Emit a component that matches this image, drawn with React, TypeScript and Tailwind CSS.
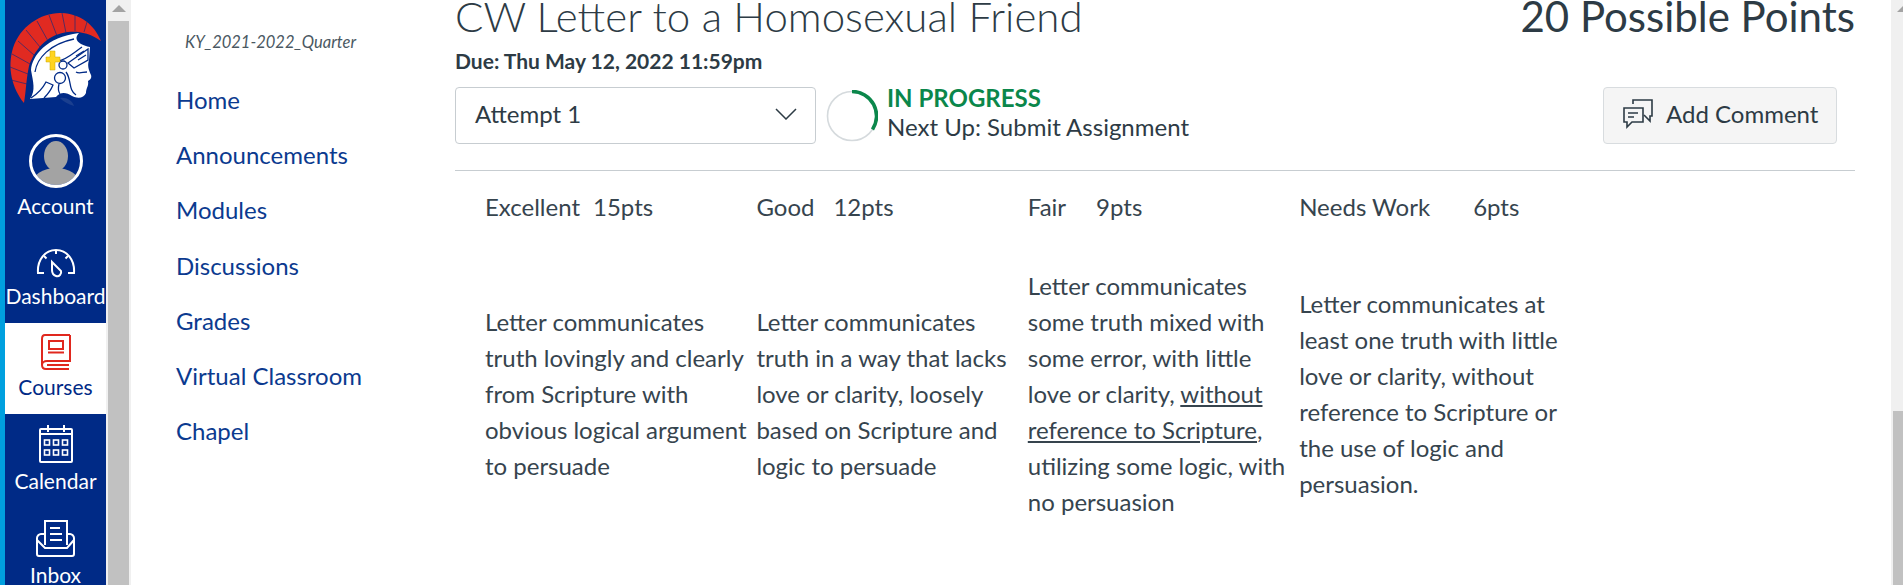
import React from 'react';

const Logo = () => (
  <svg width="101" height="110" viewBox="5 0 101 110">
    {/* crest */}
    <path d="M24 103 C12 88 7 68 13 48 C20 26 42 12 62 13 C80 14 94 24 101 41 C90 33 78 31 68 32 C50 34 36 46 29 66 C26 80 26 92 24 103 Z" fill="#e12a21" />
    <g stroke="#002a86" strokeWidth="0.8" fill="none" opacity="0.75">
      <path d="M27 84 L11 80" />
      <path d="M28 74 L10 67" />
      <path d="M30 64 L12 54" />
      <path d="M34 55 L18 41" />
      <path d="M40 47 L26 30" />
      <path d="M48 41 L37 21" />
      <path d="M57 36 L49 15" />
      <path d="M66 33 L62 13" />
      <path d="M75 31 L75 15" />
      <path d="M84 32 L87 22" />
    </g>
    {/* helmet */}
    <path d="M30 99 C36 90 33 82 31 70 C32 56 46 37 79 33 C74 38 76 44 90 47 L89 60 C87 66 89 70 91 75 C92 78 90 80 88 81 C89 86 86 88 86 93 C84 98 78 99 72 96 C66 92 60 92 56 97 Z" fill="#ffffff" />
    <g stroke="#002a86" strokeWidth="1.3" fill="none">
      <path d="M35 72 C37 58 50 44 74 39" />
      <path d="M31 98 C40 92 44 86 46 82 L53 85 C51 90 48 94 44 98" />
      <path d="M58 61 C66 60 72 54 82 47" />
      <path d="M68 63 L88 49 L88 60 L74 68 Z" />
      <path d="M76 56 L84 51 M78 60 L86 55" />
      <circle cx="63" cy="65" r="4" />
      <circle cx="60" cy="78" r="5.5" />
      <path d="M59 84 C58 88 58 91 60 94" />
      <path d="M66 72 C72 80 68 90 76 95" />
      <path d="M76 72 C79 74 83 72 87 72" />
    </g>
    <path d="M50 51 H55 V57 H60 V62 H55 V70 H50 V62 H46 V57 H50 Z" fill="#ffd420" stroke="#c9a400" strokeWidth="0.5" />
    <path d="M60 98 C66 97 72 100 74 106 C68 104 64 102 60 98 Z" fill="#1a3f8f" />
  </svg>
);

const AccountIcon = () => (
  <svg width="54" height="54" viewBox="0 0 54 54" className="shrink-0">
    <defs>
      <clipPath id="acc">
        <circle cx="27" cy="27" r="24" />
      </clipPath>
    </defs>
    <g clipPath="url(#acc)" fill="#a3a3a3">
      <ellipse cx="27" cy="22" rx="12" ry="15" />
      <ellipse cx="27" cy="50" rx="24" ry="16" />
    </g>
    <circle cx="27" cy="27" r="25.5" fill="none" stroke="#ffffff" strokeWidth="3" />
  </svg>
);

const DashboardIcon = () => (
  <svg width="40" height="30" viewBox="0 0 40 30" fill="none" stroke="#ffffff" strokeWidth="2" className="shrink-0">
    <path d="M8 25 H2 C1 12 9 2 20 2 C31 2 39 12 38 25 H32" />
    <path d="M20 2 V6 M8 8 L10.5 10.5 M32 8 L29.5 10.5" />
    <path d="M16 14 L25 23 C26 26 23 29 20 28 C17 27 16 24 16 22 Z" />
  </svg>
);

const CoursesIcon = () => (
  <svg width="30" height="36" viewBox="0 0 30 36" fill="none" stroke="#e0281e" strokeWidth="2" className="shrink-0">
    <path d="M29 1 H4 C2 1 1 3 1 5 V31 C1 34 3 35 5 35 H28" />
    <path d="M29 1 V27 H6 C3 27 1 29 1 31" />
    <path d="M6 31 H28" />
    <rect x="8" y="7" width="14" height="8" />
    <path d="M7 18.5 H23" />
  </svg>
);

const CalendarIcon = () => (
  <svg width="34" height="38" viewBox="0 0 34 38" fill="none" stroke="#ffffff" strokeWidth="2" className="shrink-0">
    <rect x="1" y="4" width="32" height="33" rx="1" />
    <path d="M1 9 H33 M9 0 V7 M25 0 V7" />
    <g strokeWidth="1.6">
      <rect x="5.5" y="15" width="5" height="5" />
      <rect x="14.5" y="15" width="5" height="5" />
      <rect x="23.5" y="15" width="5" height="5" />
      <rect x="5.5" y="25" width="5" height="5" />
      <rect x="14.5" y="25" width="5" height="5" />
      <rect x="23.5" y="25" width="5" height="5" />
    </g>
  </svg>
);

const InboxIcon = () => (
  <svg width="39" height="37" viewBox="0 0 39 37" fill="none" stroke="#ffffff" strokeWidth="2" className="shrink-0">
    <path d="M9 25 V1 H31 V25" />
    <path d="M14 8 H24 M14 14 H26 M14 20 H26" />
    <path d="M9 14 H5 C3 14 1 16 1 18 V34 C1 35 2 36 3 36 H36 C37 36 38 35 38 34 V18 C38 16 36 14 34 14 H31" />
    <path d="M1 20 L9 28 H31 L38 20" />
  </svg>
);

const CommentIcon = () => (
  <svg width="30" height="30" viewBox="0 0 30 30" fill="none" stroke="#2d3b45" strokeWidth="1.6" className="shrink-0">
    <path d="M1 9 H20 V23 H9 L4 28 V23 H1 Z" />
    <path d="M5 14 H15 M5 18 H11" />
    <path d="M10 5 V1 H29 V17 H27 V22 L21 16" />
  </svg>
);

const ProgressRing = () => (
  <svg width="52" height="52" viewBox="0 0 52 52" fill="none" className="shrink-0">
    <circle cx="26" cy="26" r="24.5" stroke="#d5dadd" strokeWidth="1.6" />
    <path d="M26 1.5 A24.5 24.5 0 0 1 46.5 39.5" stroke="#0b874b" strokeWidth="3.6" />
  </svg>
);

const Scrollbar = ({ thumbClass }: { thumbClass: string }) => (
  <div className="w-[25px] shrink-0 bg-[#f0f0f0] flex flex-col items-center h-full">
    <div className="mt-[5px] h-0 w-0 border-x-[7px] border-b-[7px] border-x-transparent border-b-[#a3a3a3] shrink-0" />
    <div className={`w-[21px] flex-1 bg-[#c1c1c1] ${thumbClass}`} />
  </div>
);

const NavItem = ({
  icon,
  label,
  className,
  labelClass = '',
}: {
  icon: React.ReactNode;
  label: string;
  className: string;
  labelClass?: string;
}) => (
  <div className={`flex flex-col items-center shrink-0 ${className}`}>
    <div className="h-[47px] flex items-end justify-center">{icon}</div>
    <div className={`h-[36px] leading-[36px] text-[21px] whitespace-nowrap ${labelClass}`}>{label}</div>
  </div>
);

const courseLinks = ['Home', 'Announcements', 'Modules', 'Discussions', 'Grades', 'Virtual Classroom', 'Chapel'];

const RubricHeader = ({ name, pts, gap }: { name: string; pts: string; gap: string }) => (
  <div className="h-[36px] leading-[36px] whitespace-nowrap">
    {name}
    <span className={gap}>{pts}</span>
  </div>
);

export default function App() {
  return (
    <div className="w-[1903px] h-[585px] overflow-hidden flex bg-white font-['Lato',sans-serif] text-[#2d3b45]">
      <div className="w-[5px] shrink-0 bg-[#00a0df]" />
      <div className="w-[101px] shrink-0 bg-[#002a86] text-white flex flex-col">
        <div className="h-[141px] shrink-0">
          <Logo />
        </div>
        <NavItem icon={<AccountIcon />} label="Account" className="h-[90px]" />
        <NavItem icon={<DashboardIcon />} label="Dashboard" className="h-[92px]" />
        <NavItem icon={<CoursesIcon />} label="Courses" labelClass="-mt-[1px]" className="h-[91px] bg-white text-[#002a86]" />
        <NavItem icon={<CalendarIcon />} label="Calendar" className="h-[96px] pt-[2px]" />
        <NavItem icon={<InboxIcon />} label="Inbox" className="h-[90px]" />
      </div>
      <Scrollbar thumbClass="mt-[9px]" />

      <div className="w-[324px] shrink-0 pl-[45px]">
        <div className="pt-[32px] pl-[9px] h-[72px] text-[16.5px] italic text-[#4a5862] whitespace-nowrap leading-[20px]">
          KY_2021-2022_Quarter
        </div>
        {courseLinks.map((link) => (
          <div key={link} className="h-[55.2px] leading-[55px] text-[24px] text-[#0b3a8f] whitespace-nowrap">
            {link}
          </div>
        ))}
      </div>

      <div className="w-[1436px] shrink-0 pr-[36px]">
        <div className="flex justify-between items-start -mt-[10px] h-[58px]">
          <h1 className="text-[42px] font-light leading-[52px] whitespace-nowrap">
            CW Letter to a Homosexual Friend
          </h1>
          <div className="text-[42px] leading-[52px] whitespace-nowrap">20 Possible Points</div>
        </div>
        <div className="h-[39px] leading-[26px] text-[21px] font-bold whitespace-nowrap">
          Due: Thu May 12, 2022 11:59pm
        </div>
        <div className="flex items-center h-[57px]">
          <div className="w-[361px] h-[57px] pb-[4px] border border-[#c7cdd1] rounded-[4px] flex items-center justify-between pl-[19px] pr-[18px] text-[24px]">
            <span>Attempt 1</span>
            <svg width="22" height="12" viewBox="0 0 22 12" fill="none" stroke="#2d3b45" strokeWidth="1.5">
              <path d="M1 1 L11 11 L21 1" />
            </svg>
          </div>
          <div className="ml-[10px]">
            <ProgressRing />
          </div>
          <div className="ml-[9px] flex flex-col text-[24px] leading-[29px] -mt-[7px]">
            <span className="font-bold text-[#0b874b]">IN PROGRESS</span>
            <span>Next Up: Submit Assignment</span>
          </div>
          <div className="ml-auto mr-[18px] w-[234px] h-[57px] pb-[3px] bg-[#f5f5f5] border border-[#d8dcdf] rounded-[4px] flex items-center pl-[19px] gap-[13px] text-[24px] whitespace-nowrap">
            <CommentIcon />
            <span>Add Comment</span>
          </div>
        </div>
        <div className="mt-[26px] border-t border-[#c7cdd1]" />

        <div className="pl-[30px] pt-[18px] text-[24px] text-[#36444e] grid grid-cols-[repeat(4,271.4px)]">
          <RubricHeader name="Excellent" pts="15pts" gap="ml-[13px]" />
          <RubricHeader name="Good" pts="12pts" gap="ml-[19px]" />
          <RubricHeader name="Fair" pts="9pts" gap="ml-[30px]" />
          <RubricHeader name="Needs Work" pts="6pts" gap="ml-[43px]" />
        </div>
        <div className="pl-[30px] mt-[43px] h-[252px] text-[24px] leading-[36px] text-[#36444e] grid grid-cols-[repeat(4,271.4px)] items-center">
          <p className="w-[268px]">Letter communicates truth lovingly and clearly from Scripture with obvious logical argument to persuade</p>
          <p className="w-[262px]">Letter communicates truth in a way that lacks love or clarity, loosely based on Scripture and logic to persuade</p>
          <p className="w-[265px]">
            Letter communicates some truth mixed with some error, with little love or clarity,{' '}
            <span className="underline">without reference to Scripture</span>, utilizing some logic, with no persuasion
          </p>
          <p className="w-[265px]">Letter communicates at least one truth with little love or clarity, without reference to Scripture or the use of logic and persuasion.</p>
        </div>
      </div>

      <Scrollbar thumbClass="mt-[399px]" />
    </div>
  );
}
